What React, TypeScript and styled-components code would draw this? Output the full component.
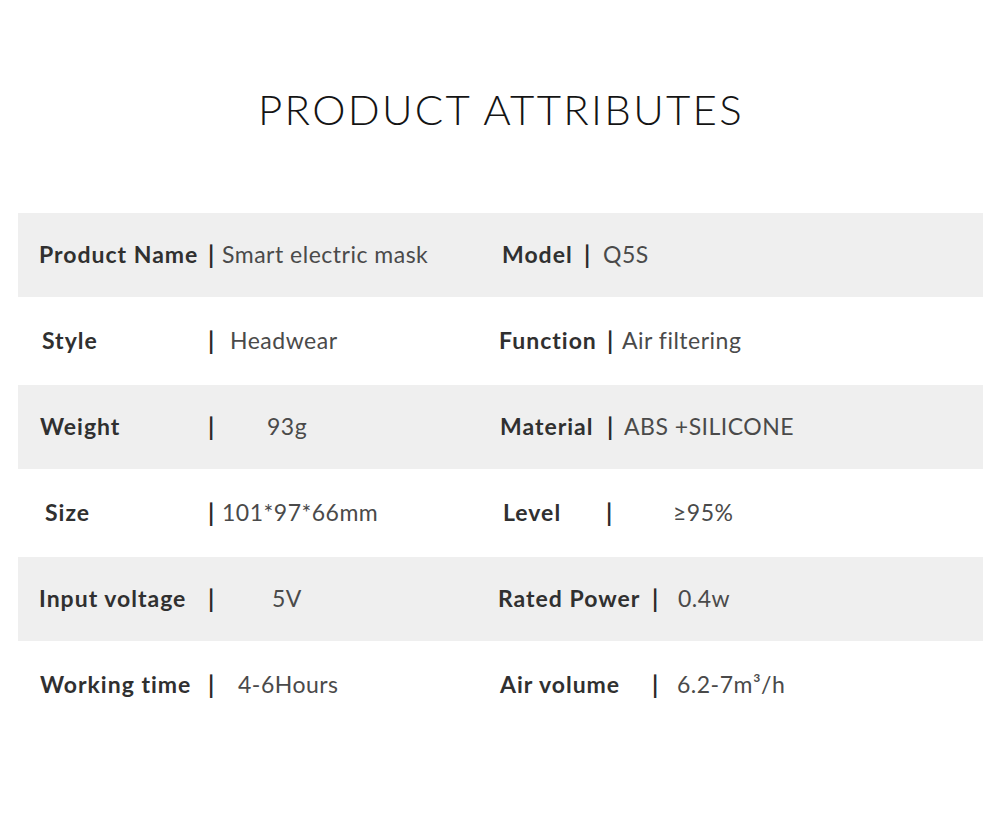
import React from "react";
import styled, { createGlobalStyle } from "styled-components";

const GlobalStyle = createGlobalStyle`
  html, body { margin: 0; padding: 0; background: #ffffff; }
  body { font-family: "Lato", "Liberation Sans", sans-serif; }
`;

const Page = styled.div`
  width: 1000px;
  height: 815px;
  background: #ffffff;
  display: flex;
  flex-direction: column;
`;

const Header = styled.header`
  height: 213px;
  box-sizing: border-box;
  padding-top: 84px;
  display: flex;
  justify-content: center;
  align-items: flex-start;
`;

const Title = styled.h1`
  margin: 0;
  padding-left: 2px;
  font-family: "Lato", "Liberation Sans", sans-serif;
  font-weight: 300;
  font-size: 42px;
  line-height: 50px;
  letter-spacing: 2.3px;
  color: #141414;
`;

const Table = styled.div`
  margin: 0 17px 0 18px;
  display: flex;
  flex-direction: column;
`;

const Row = styled.div<{ $shaded: boolean }>`
  display: grid;
  grid-template-columns: 462px 1fr;
  height: ${(p) => (p.$shaded ? 84 : 88)}px;
  background: ${(p) => (p.$shaded ? "#efefef" : "#ffffff")};
`;

const Cell = styled.div<{ $bar: number }>`
  display: grid;
  grid-template-columns: ${(p) => p.$bar - 2}px 6px 1fr;
  align-items: center;
  padding-bottom: ${() => 2}px;
`;

const Label = styled.span<{ $indent: number }>`
  padding-left: ${(p) => p.$indent}px;
  font-size: 23px;
  font-weight: 700;
  letter-spacing: 1px;
  color: #303030;
  white-space: nowrap;
`;

const Bar = styled.span`
  font-size: 24px;
  font-weight: 700;
  color: #2b2b2b;
  text-align: center;
`;

const Value = styled.span<{ $pad: number }>`
  padding-left: ${(p) => p.$pad}px;
  font-size: 23px;
  font-weight: 400;
  letter-spacing: 0.5px;
  color: #4a4a4a;
  white-space: nowrap;
`;

type Attr = { label: string; value: React.ReactNode; indent: number; bar: number; value_x: number };

const rows: [Attr, Attr][] = [
  [
    { label: "Product Name", value: "Smart electric mask", indent: 21, bar: 192, value_x: 204 },
    { label: "Model", value: "Q5S", indent: 22, bar: 106, value_x: 123 },
  ],
  [
    { label: "Style", value: "Headwear", indent: 24, bar: 192, value_x: 212 },
    { label: "Function", value: "Air filtering", indent: 19, bar: 129, value_x: 142 },
  ],
  [
    { label: "Weight", value: "93g", indent: 22, bar: 192, value_x: 249 },
    { label: "Material", value: "ABS +SILICONE", indent: 20, bar: 129, value_x: 144 },
  ],
  [
    { label: "Size", value: "101*97*66mm", indent: 27, bar: 192, value_x: 204 },
    { label: "Level", value: "≥95%", indent: 23, bar: 128, value_x: 193 },
  ],
  [
    { label: "Input voltage", value: "5V", indent: 21, bar: 192, value_x: 254 },
    { label: "Rated Power", value: "0.4w", indent: 18, bar: 174, value_x: 198 },
  ],
  [
    { label: "Working time", value: "4-6Hours", indent: 22, bar: 192, value_x: 220 },
    { label: "Air volume", value: <>6.2-7m³/h</>, indent: 20, bar: 174, value_x: 197 },
  ],
];

const AttrCell = ({ a }: { a: Attr }) => (
  <Cell $bar={a.bar}>
    <Label $indent={a.indent}>{a.label}</Label>
    <Bar>|</Bar>
    <Value $pad={a.value_x - (a.bar + 4)}>{a.value}</Value>
  </Cell>
);

export default function App() {
  return (
    <Page>
      <GlobalStyle />
      <Header>
        <Title>PRODUCT ATTRIBUTES</Title>
      </Header>
      <Table>
        {rows.map((r, i) => (
          <Row key={i} $shaded={i % 2 === 0}>
            <AttrCell a={r[0]} />
            <AttrCell a={r[1]} />
          </Row>
        ))}
      </Table>
    </Page>
  );
}
